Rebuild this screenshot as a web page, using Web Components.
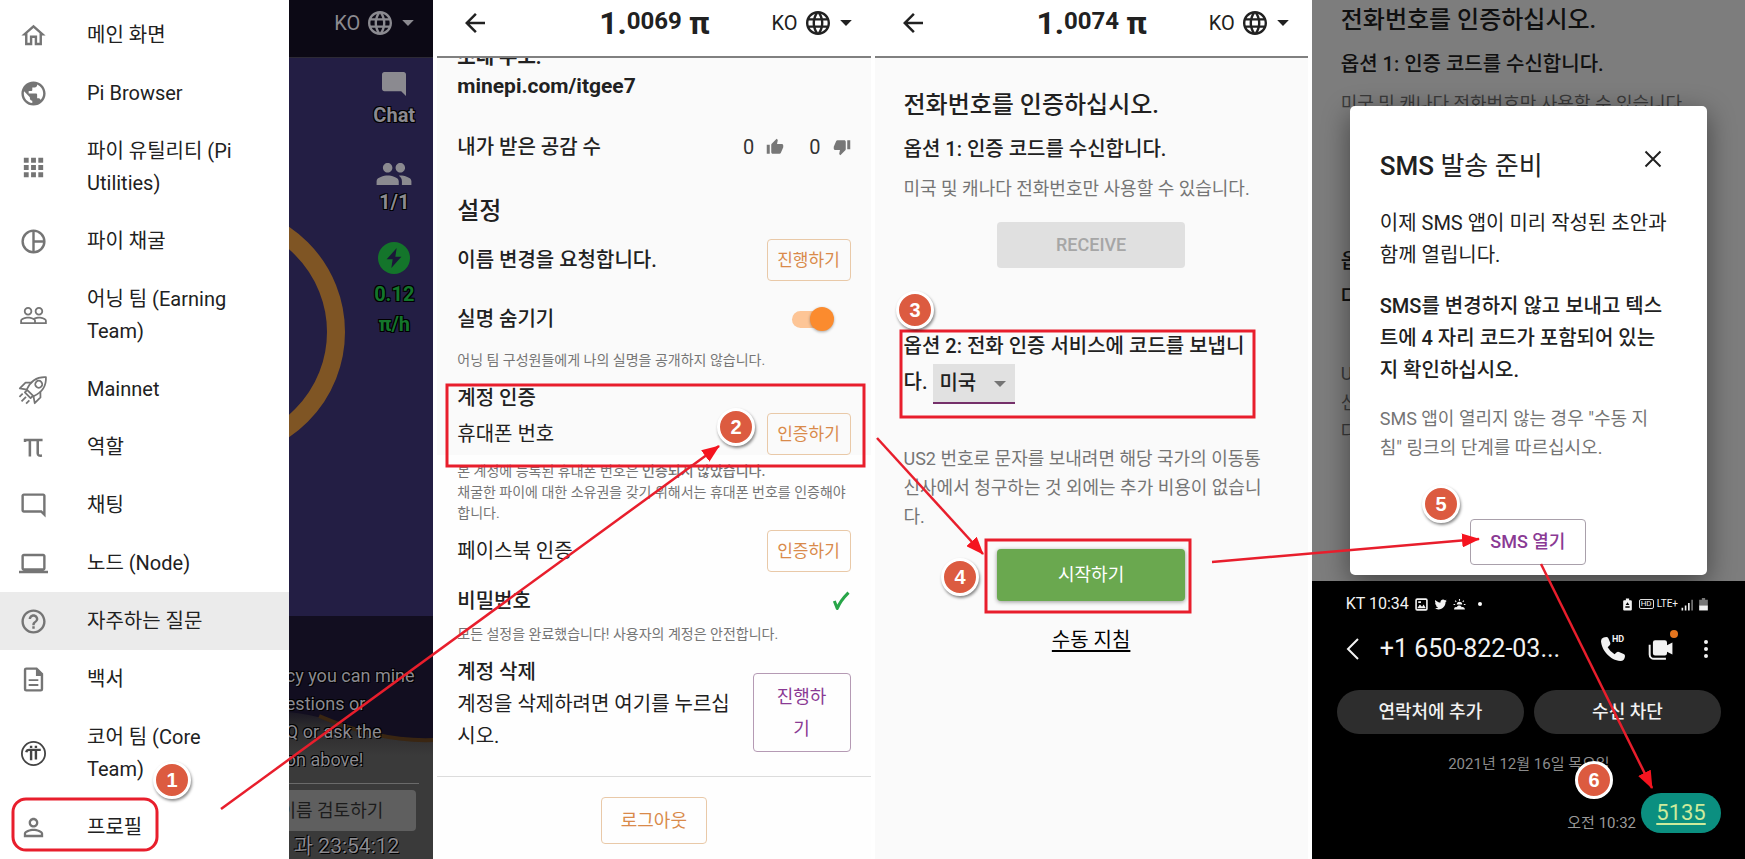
<!DOCTYPE html>
<html lang="ko">
<head>
<meta charset="utf-8">
<title>Pi 전화번호 인증 안내</title>
<style>
body{margin:0;background:#fff;color:#212121;font-family:Roboto,"Noto Sans CJK KR",sans-serif;font-size:20px;line-height:32px}
</style>
</head>
<body>
<guide-page></guide-page>
<script>
const solid = d => `<path d="${d}" fill="currentColor"/>`;
const line = (inner, w = 2) => `<g fill="none" stroke="currentColor" stroke-width="${w}">${inner}</g>`;
const ICONS = {
  home: solid('M12 5.69l5 4.5V18h-2v-6H9v6H7v-7.81l5-4.5M12 3L2 12h3v8h6v-6h2v6h6v-8h3L12 3z'),
  public: solid('M12 2C6.48 2 2 6.48 2 12s4.48 10 10 10 10-4.48 10-10S17.52 2 12 2zm-1 17.93c-3.95-.49-7-3.85-7-7.93 0-.62.08-1.21.21-1.79L9 15v1c0 1.1.9 2 2 2v1.93zm6.9-2.54c-.26-.81-1-1.39-1.9-1.39h-1v-3c0-.55-.45-1-1-1H8v-2h2c.55 0 1-.45 1-1V7h2c1.1 0 2-.9 2-2v-.41c2.93 1.19 5 4.06 5 7.41 0 2.08-.8 3.97-2.1 5.39z'),
  apps: solid('M4 8h4V4H4v4zm6 12h4v-4h-4v4zm-6 0h4v-4H4v4zm0-6h4v-4H4v4zm6 0h4v-4h-4v4zm6-10v4h4V4h-4zm-6 4h4V4h-4v4zm6 6h4v-4h-4v4zm0 6h4v-4h-4v4z'),
  pie: line('<circle cx="12" cy="12" r="9"/><path d="M12 3v18M12 12h9"/>'),
  team: solid('M16.5 13c-1.2 0-3.07.34-4.5 1-1.43-.67-3.3-1-4.5-1C5.33 13 1 14.08 1 16.25V19h22v-2.75c0-2.17-4.33-3.25-6.5-3.25zm-4 4.5h-10v-1.25c0-.54 2.56-1.75 5-1.75s5 1.21 5 1.75v1.25zm9 0H14v-1.25c0-.46-.2-.86-.52-1.22.88-.3 1.96-.53 3.02-.53 2.44 0 5 1.21 5 1.75v1.25zM7.5 12c1.93 0 3.5-1.57 3.5-3.5S9.43 5 7.5 5 4 6.57 4 8.5 5.57 12 7.5 12zm0-5.5c1.1 0 2 .9 2 2s-.9 2-2 2-2-.9-2-2 .9-2 2-2zm9 5.5c1.93 0 3.5-1.57 3.5-3.5S18.43 5 16.5 5 13 6.57 13 8.5s1.57 3.5 3.5 3.5zm0-5.5c1.1 0 2 .9 2 2s-.9 2-2 2-2-.9-2-2 .9-2 2-2z'),
  rocket: line('<g transform="rotate(45 12 12) translate(-1.440 -.3) scale(1.120)" stroke-linejoin="round"><path d="M12-2C16.500 2 18 8 15.500 14.500h-7C6 8 7.500 2 12-2z"/><circle cx="12" cy="5.500" r="2.600"/><path d="M9 14.500v2.500h6v-2.500M7.300 8.500L4.200 11.500V17.500L8.500 14.500M16.700 8.500l3.100 3V17.500L15.500 14.500M12 18.800v4.700M8.500 18.800v3.400M15.500 18.800v3.400"/></g>', 1.3),
  pi: line('<path d="M5 7.500V5.800H19.500M9 6v13.500M15.500 6v11q0 2.200 3.500 1.700"/>', 2.1),
  comment: solid('M20 17.170L18.830 16H4V4h16v13.170zM20 2H4c-1.100 0-2 .9-2 2v12c0 1.100.9 2 2 2h14l4 4V4c0-1.100-.9-2-2-2z'),
  commentFull: solid('M22 4c0-1.100-.9-2-2-2H4c-1.100 0-2 .9-2 2v12c0 1.100.9 2 2 2h14l4 4V4z'),
  laptop: solid('M20 18c1.100 0 1.990-.9 1.990-2L22 6c0-1.100-.9-2-2-2H4c-1.100 0-2 .9-2 2v10c0 1.100.9 2 2 2H0v2h24v-2h-4zM4 6h16v10H4V6z'),
  help: solid('M11 18h2v-2h-2v2zm1-16C6.480 2 2 6.480 2 12s4.480 10 10 10 10-4.480 10-10S17.520 2 12 2zm0 18c-4.410 0-8-3.590-8-8s3.590-8 8-8 8 3.590 8 8-3.590 8-8 8zm0-14c-2.210 0-4 1.790-4 4h2c0-1.100.9-2 2-2s2 .9 2 2c0 2-3 1.750-3 5h2c0-2.250 3-2.500 3-5 0-2.210-1.790-4-4-4z'),
  doc: line('<path d="M14.500 3H6a1 1 0 0 0-1 1v16a1 1 0 0 0 1 1h12a1 1 0 0 0 1-1V7.500z"/><path d="M8 12.500h8M8 16.500h8" stroke-width="1.600"/>') + solid('M14 3v6h6z'),
  core: '<g color="#444">' + line('<circle cx="12" cy="12" r="9.600"/>', 1.5) + line('<path d="M6 11Q6.300 9 8.500 9H18M10 9v8.500M14 9v8M10 5.500v2M14 5.500v2"/>', 2) + '</g>',
  person: solid('M12 5.900c1.160 0 2.100.94 2.100 2.100s-.94 2.100-2.100 2.100S9.900 9.160 9.900 8s.94-2.100 2.100-2.100m0 9c2.970 0 6.100 1.460 6.100 2.100v1.100H5.900V17c0-.64 3.130-2.100 6.100-2.100M12 4C9.790 4 8 5.790 8 8s1.790 4 4 4 4-1.790 4-4-1.790-4-4-4zm0 9c-2.670 0-8 1.340-8 4v3h16v-3c0-2.660-5.330-4-8-4z'),
  people: solid('M16 11c1.660 0 2.990-1.340 2.990-3S17.660 5 16 5c-1.660 0-3 1.340-3 3s1.340 3 3 3zm-8 0c1.660 0 2.990-1.340 2.990-3S9.660 5 8 5C6.340 5 5 6.340 5 8s1.340 3 3 3zm0 2c-2.330 0-7 1.170-7 3.500V19h14v-2.500c0-2.330-4.670-3.500-7-3.500zm8 0c-.29 0-.62.02-.97.05 1.160.84 1.970 1.970 1.970 3.450V19h6v-2.500c0-2.330-4.670-3.500-7-3.500z'),
  bolt: '<circle cx="12" cy="12" r="12" fill="currentColor"/><path d="M14 4.500L6.500 13H11l-1 6.500 7.500-8.500H13z" fill="#1a1838"/>',
  globe: solid('M11.990 2C6.470 2 2 6.480 2 12s4.470 10 9.990 10C17.520 22 22 17.520 22 12S17.520 2 11.990 2zm6.930 6h-2.950c-.32-1.250-.78-2.450-1.380-3.560 1.840.63 3.370 1.910 4.330 3.560zM12 4.040c.83 1.200 1.480 2.530 1.910 3.960h-3.820c.43-1.430 1.080-2.760 1.910-3.960zM4.260 14C4.100 13.360 4 12.690 4 12s.1-1.360.26-2h3.380c-.08.66-.14 1.320-.14 2 0 .68.06 1.340.14 2H4.260zm.82 2h2.950c.32 1.250.78 2.450 1.380 3.560-1.840-.63-3.370-1.900-4.330-3.560zm2.950-8H5.080c.96-1.660 2.490-2.930 4.330-3.560C8.810 5.550 8.350 6.750 8.030 8zM12 19.960c-.83-1.200-1.480-2.530-1.910-3.960h3.820c-.43 1.430-1.080 2.760-1.910 3.960zM14.340 14H9.660c-.09-.66-.16-1.320-.16-2 0-.68.07-1.350.16-2h4.680c.09.65.16 1.320.16 2 0 .68-.07 1.340-.16 2zm.25 5.560c.6-1.110 1.060-2.310 1.380-3.560h2.950c-.96 1.650-2.490 2.930-4.330 3.560zM16.360 14c.08-.66.14-1.320.14-2 0-.68-.06-1.340-.14-2h3.380c.16.64.26 1.310.26 2s-.1 1.360-.26 2h-3.380z'),
  caret: solid('M7 9.500l5 5 5-5z'),
  back: solid('M20 11H7.830l5.590-5.590L12 4l-8 8 8 8 1.410-1.410L7.830 13H20v-2z'),
  up: solid('M1 21h4V9H1v12zm22-11c0-1.100-.9-2-2-2h-6.310l.95-4.570.03-.32c0-.41-.17-.79-.44-1.060L14.170 1 7.590 7.590C7.220 7.950 7 8.450 7 9v10c0 1.100.9 2 2 2h9c.83 0 1.540-.5 1.840-1.220l3.020-7.050c.09-.23.14-.47.14-.73v-2z'),
  down: solid('M15 3H6c-.83 0-1.540.5-1.840 1.220l-3.020 7.050c-.09.23-.14.47-.14.73v2c0 1.100.9 2 2 2h6.310l-.95 4.570-.03.32c0 .41.17.79.44 1.060L9.830 23l6.590-6.590c.36-.36.58-.86.58-1.410V5c0-1.100-.9-2-2-2zm4 0v12h4V3h-4z'),
  check: line('<path d="M4 12q1.500 4 3.500 9Q11 12 21 2" stroke-linejoin="round"/>', 3.6),
  close: line('<path d="M2 2l20 20M22 2L2 22"/>', 2.6),
  chevron: line('<path d="M17 2L7 12l10 10"/>', 2),
  phone: solid('M3 6Q3 4 5 3.300L7 3Q8 3 8.500 4L10 7.500Q10.200 8.500 9.500 9.200L8 10.700Q9.800 14 13.200 15.900L14.800 14.400Q15.500 13.800 16.500 14.200L20 15.800Q21 16.300 21 17.300Q20.800 21 17.500 21C10 20.500 3.400 13 3 6z'),
  video: solid('M7 4h9a2 2 0 0 1 2 2v2.500l5-2.500v11l-5-2.500V16a2 2 0 0 1-2 2H7a2 2 0 0 1-2-2V6A2 2 0 0 1 7 4z') + line('<path d="M2 8v9a4 4 0 0 0 4 4H17"/>', 1.8),
  more: solid('M12 3a2 2 0 1 0 0 4 2 2 0 0 0 0-4zm0 7a2 2 0 1 0 0 4 2 2 0 0 0 0-4zm0 7a2 2 0 1 0 0 4 2 2 0 0 0 0-4z'),
  picture: line('<rect x="2" y="2" width="20" height="20" rx="2"/>', 3) + solid('M4 19l5-7 4 4 3-4 4 7zM6 6h5v3H6z'),
  bird: solid('M23.643 4.937c-.835.37-1.732.62-2.675.733.962-.576 1.700-1.490 2.048-2.578-.9.534-1.897.922-2.958 1.130-.85-.904-2.060-1.470-3.400-1.470-2.572 0-4.658 2.086-4.658 4.660 0 .364.042.718.12 1.060-3.873-.195-7.304-2.050-9.602-4.868-.4.69-.63 1.490-.63 2.342 0 1.616.823 3.043 2.072 3.878-.764-.025-1.482-.234-2.110-.583v.06c0 2.257 1.605 4.140 3.737 4.568-.392.106-.803.162-1.227.162-.3 0-.593-.028-.877-.082.593 1.850 2.313 3.198 4.352 3.234-1.595 1.250-3.604 1.995-5.786 1.995-.376 0-.747-.022-1.112-.065 2.062 1.323 4.510 2.093 7.140 2.093 8.570 0 13.255-7.098 13.255-13.254 0-.2-.005-.402-.014-.602.91-.658 1.700-1.477 2.323-2.410z'),
  weather: solid('M2 21c0-4 3-5 5-4 1-4 8-4 9 0 3-1 6 1 6 4zM7 12a5 5 0 0 1 10 0z') + line('<path d="M12 2v3M4 5l2 2M20 5l-2 2M1 12h3M20 12h3"/>', 2),
  recycle: solid('M9 1h6v3h3a2 2 0 0 1 2 2v15a2 2 0 0 1-2 2H6a2 2 0 0 1-2-2V6a2 2 0 0 1 2-2h3z') + '<path d="M12 8l3.500 5h-7zM8 15h8v3H8z" fill="#000"/>',
  signal: solid('M1 18h3v5H1zM7 14h3v9H7zM13 9h3v14h-3z') + '<path d="M19 3h3v20h-3z" fill="#777"/>',
  battery: '<path d="M9 0h6v3h5v12H4V3h5z" fill="#777"/><path d="M4 14h16v9H4z" fill="currentColor"/>'
};

/* Registers an element whose shadow root is built from its styles and markup. */
function define(name, css, markup) {
  customElements.define(name, class extends HTMLElement {
    constructor() {
      super();
      const tpl = document.createElement('template');
      const html = typeof markup === 'function' ? markup(this) : markup;
      tpl.innerHTML = `<style>*{box-sizing:border-box}h1,h2,h3,p{margin:0;font-size:inherit;font-weight:inherit}button,select{font:inherit;color:inherit;margin:0}${css}</style>${html}`;
      this.attachShadow({ mode: 'open' }).append(tpl.content.cloneNode(true));
    }
  });
}

define('ui-icon', ':host{display:block;flex:none;width:24px;height:24px}svg{display:block;width:100%;height:100%;overflow:visible}',
  el => `<svg viewBox="${el.getAttribute('box') || '0 0 24 24'}" aria-hidden="true">${ICONS[el.getAttribute('name')]}</svg>`);

define('outline-button', `
  :host{display:block;flex:none;width:84px;color:#d98a4a;font-size:17px;--edge:#e9c9a8;--h:42px}
  :host([tone=purple]){color:#8a3a94;font-size:18px;--edge:#b59ab4;--h:79px;width:98px}
  :host([size=large]){width:106px;font-size:18px;--h:47px}
  :host([size=dialog]){width:116px;font-weight:500;--h:46px;--edge:#a9a0ab}
  button{display:block;width:100%;min-height:var(--h);padding:0 20px;border:1px solid var(--edge);border-radius:4px;background:transparent;line-height:32px}
  :host(:not([tone])) button,:host([size]) button{padding:0;white-space:nowrap}
`, '<button type="button"><slot></slot></button>');

define('lang-picker', `
  :host{display:block}
  button{display:flex;align-items:center;border:0;padding:0;background:none;line-height:32px}
  ui-icon.globe{margin-left:8px}
  ui-icon.caret{width:28px;height:28px;margin-left:2px}
`, '<button type="button">KO<ui-icon class="globe" name="globe" box="2 2 20 20"></ui-icon><ui-icon class="caret" name="caret"></ui-icon></button>');

define('phone-header', `
  :host{display:grid;grid-template-columns:1fr auto 1fr;align-items:center;height:58px;padding:0 11px 10px 28px;background:#fff;border-bottom:2px solid #808080;box-sizing:border-box}
  .back{border:0;background:none;padding:0;width:20px}
  .back ui-icon{width:20px;height:20px}
  h1{display:flex;align-items:flex-start;font-weight:700;font-size:32px;line-height:40px;padding-right:16px}
  sup{font-size:24px;line-height:36px;margin-right:7px;vertical-align:baseline}
  lang-picker{justify-self:end}
`, el => `<button class="back" type="button" aria-label="뒤로"><ui-icon name="back" box="4 4 16 16"></ui-icon></button>
  <h1>1.<sup>${el.getAttribute('fraction')}</sup>π</h1><lang-picker></lang-picker>`);

define('nav-item', `
  :host{display:block}
  :host([active]){background:#ebebeb}
  a{display:flex;align-items:center;padding:13px 32px 13px 19px;color:inherit;text-decoration:none;line-height:32px}
  ui-icon{width:29px;height:29px;margin-right:39px;color:#757575}
`, el => `<a href="#"><ui-icon name="${el.getAttribute('icon')}"></ui-icon><span><slot></slot></span></a>`);

define('nav-drawer', ':host{display:block;background:#fff;padding-top:6px}', `
  <nav>
  <nav-item icon="home">메인 화면</nav-item>
  <nav-item icon="public">Pi Browser</nav-item>
  <nav-item icon="apps">파이 유틸리티 (Pi Utilities)</nav-item>
  <nav-item icon="pie">파이 채굴</nav-item>
  <nav-item icon="team">어닝 팀 (Earning Team)</nav-item>
  <nav-item icon="rocket">Mainnet</nav-item>
  <nav-item icon="pi">역할</nav-item>
  <nav-item icon="comment">채팅</nav-item>
  <nav-item icon="laptop">노드 (Node)</nav-item>
  <nav-item icon="help" active>자주하는 질문</nav-item>
  <nav-item icon="doc">백서</nav-item>
  <nav-item icon="core">코어 팀 (Core Team)</nav-item>
  <nav-item icon="person">프로필</nav-item>
  </nav>`);

define('home-backdrop', `
  :host{display:flex;flex-direction:column;position:relative;overflow:hidden;background:#231e44;color:#8b8a90}
  header{display:flex;justify-content:flex-end;height:58px;padding:7px 11px 0 0;background:#0c0915;border-bottom:1px solid #2d2a36}
  .ring{position:absolute;left:0;top:0;width:144px;height:616px}
  .stats{position:relative;flex:1;align-self:flex-end;width:78px;padding-top:10px;text-align:center;font-weight:700;line-height:28px;
    text-shadow:1px 1px #000,-1px -1px #000,1px -1px #000,-1px 1px #000}
  .stat{display:flex;flex-direction:column;align-items:center;gap:1px;margin-bottom:26px}
  .slot{display:grid;place-items:center;height:32px}
  .chat{width:24px;height:24px}.people{width:38px;height:38px}.bolt{width:32px;height:32px}
  .rate{color:#14752b;line-height:30px;gap:5px}
  footer{padding:46px 0 0;background:linear-gradient(#120e20 0 88px,#2b2a2c 110px,#3a3a3a 140px,#3a3a3a);font-size:18px;line-height:28px;white-space:nowrap;position:relative}
  .hill{position:absolute;left:0;top:0;width:100%;height:130px}
  .text{position:relative;margin-left:-3px;text-shadow:1px 1px #000,-1px -1px #000,1px -1px #000}
  hr{margin:9px 14px 6px 0;border:0;border-top:1px solid #6a6a6a}
  button{display:block;width:calc(100% + 19px);margin-left:-36px;height:41px;border:0;border-radius:4px;background:#5f5f5f;color:#1c1c1c;text-align:right;padding:0 33px 0 0}
  .time{font-size:21px;line-height:26px;margin:2px 0 0 5px;text-shadow:1px 1px #000,-1px -1px #000}
`, `
  <header><lang-picker></lang-picker></header>
  <svg class="ring" viewBox="0 0 144 616" aria-hidden="true"><circle cx="-71" cy="332" r="118" fill="none" stroke="#7f5524" stroke-width="18"/></svg>
  <div class="stats">
    <div class="stat"><span class="slot"><ui-icon class="chat" name="commentFull" box="2 2 20 20"></ui-icon></span><span>Chat</span></div>
    <div class="stat"><span class="slot"><ui-icon class="people" name="people"></ui-icon></span><span>1/1</span></div>
    <div class="stat rate"><span class="slot"><ui-icon class="bolt" name="bolt"></ui-icon></span><span>0.12<br>π/h</span></div>
  </div>
  <footer>
    <svg class="hill" viewBox="0 0 144 130" preserveAspectRatio="none" aria-hidden="true"><path d="M0 0H144V124Q90 124 40 104Q20 98 0 96z" fill="#120e20"/><path d="M30 100Q90 126 144 124" fill="none" stroke="#3a2612" stroke-width="4"/></svg>
    <div class="text">cy you can mine<br>estions or<br>Q or ask the<br>on above!</div>
    <hr>
    <button type="button">이름 검토하기</button>
    <div class="time">과 23:54:12</div>
  </footer>`);

define('profile-screen', `
  :host{display:flex;flex-direction:column;background:#fefefe}
  main{overflow:hidden}
  section{padding:0 20px}
  .top{background:#fafafa}
  .row{display:flex;align-items:center;justify-content:space-between;min-height:42px}
  h2{font-size:24px;font-weight:500;line-height:40px;margin:23px 0 8px}
  h3,.strong{font-weight:500}
  .invite{margin-top:-15px;line-height:29px;font-weight:700}
  .invite span{font-size:21px}
  .votes{display:flex;align-items:center;color:#333}
  .votes ui-icon{width:18px;height:18px;color:#777;margin-left:12px}
  .votes ui-icon:first-of-type{margin-right:25px}
  .small{font-size:14px;line-height:21px;color:#757575}
  .account{padding-top:11px}
  .account h3{margin-bottom:-1px}
  input{appearance:none;position:relative;width:42px;height:24px;margin:0 17px 0 0}
  input::before{content:"";position:absolute;left:0;top:4px;width:38px;height:17px;border-radius:9px;background:#fdc596}
  input::after{content:"";position:absolute;right:0;top:0;width:24px;height:24px;border-radius:50%;background:#fb8b2e;box-shadow:0 1px 3px #0005}
  .ok{width:20px;height:22px;color:#27a548}
  .delete{display:flex;align-items:flex-end;gap:16px;margin-top:11px}
  footer{border-top:1px solid #dcdcdc;margin-top:24px;padding-top:20px;display:flex;justify-content:center}
`, `
  <phone-header fraction="0069"></phone-header>
  <main>
    <section class="top">
      <p class="invite">초대 주소:<br><span>minepi.com/itgee7</span></p>
      <div class="row" style="margin-top:25px"><span class="strong">내가 받은 공감 수</span><span class="votes">0<ui-icon name="up"></ui-icon>0<ui-icon name="down"></ui-icon></span></div>
      <h2>설정</h2>
      <div class="row"><h3>이름 변경을 요청합니다.</h3><outline-button>진행하기</outline-button></div>
      <div class="row" style="margin-top:17px"><label class="strong" for="hide">실명 숨기기</label><input id="hide" type="checkbox" role="switch" checked></div>
      <p class="small" style="margin-top:10px">어닝 팀 구성원들에게 나의 실명을 공개하지 않습니다.</p>
      <div class="account"><h3>계정 인증</h3>
      <div class="row"><span>휴대폰 번호</span><outline-button>인증하기</outline-button></div></div>
    </section>
    <section>
      <p class="small" style="padding:6px 0">본 계정에 등록된 휴대폰 번호은 <b style="font-weight:500">인증되지 않았습니다.</b><br>채굴한 파이에 대한 소유권을 갖기 위해서는 휴대폰 번호를 인증해야 합니다.</p>
      <div class="row"><span>페이스북 인증</span><outline-button>인증하기</outline-button></div>
      <div class="row" style="margin-top:8px"><h3>비밀번호</h3><ui-icon class="ok" name="check"></ui-icon></div>
      <p class="small" style="margin-top:2px">모든 설정을 완료했습니다! 사용자의 계정은 안전합니다.</p>
      <div class="delete"><div><h3>계정 삭제</h3><p>계정을 삭제하려면 여기를 누르십시오.</p></div><outline-button tone="purple">진행하기</outline-button></div>
    </section>
    <footer><outline-button size="large">로그아웃</outline-button></footer>
  </main>`);

define('verify-form', `
  :host{display:block;background:#fafafa;padding:31px 29px 0}
  :host([covered]) :is(button,.pick,a){visibility:hidden}
  h2{font-size:24px;font-weight:500}
  h3{font-weight:500;margin-top:12px}
  p{font-size:18px;line-height:29px;color:#757575;margin-top:9px}
  button{display:block;width:188px;min-height:46px;margin:19px auto 0;border:0;border-radius:4px;background:#e0e0e0;color:#a6a6a6;font-size:18px;font-weight:500}
  .country{margin-top:60px;padding-right:16px;line-height:36px}
  .pick{position:relative;display:inline-block;vertical-align:middle;margin-left:1px}
  select{appearance:none;display:block;width:82px;height:40px;padding:0 6px;border:0;border-bottom:2px solid #75306a;border-radius:0;background:#e1e1e1}
  .pick::after{content:"";position:absolute;right:9px;top:17px;border:6px solid transparent;border-top:6px solid #757575;border-bottom:0;pointer-events:none}
  p.cost{margin-top:40px;padding-right:8px}
  button.go{min-height:52px;margin-top:18px;background:#6aa84f;color:#fff;font-weight:400;box-shadow:0 1px 4px #0006}
  a{display:table;margin:23px auto 0;color:#000;text-underline-offset:3px;text-decoration-thickness:2px}
`, `
  <h2>전화번호를 인증하십시오.</h2>
  <h3>옵션 1: 인증 코드를 수신합니다.</h3>
  <p>미국 및 캐나다 전화번호만 사용할 수 있습니다.</p>
  <button type="button" disabled>RECEIVE</button>
  <h3 class="country">옵션 2: 전화 인증 서비스에 코드를 보냅니다. <span class="pick"><select aria-label="국가"><option>미국</option></select></span></h3>
  <p class="cost">US2 번호로 문자를 보내려면 해당 국가의 이동통신사에서 청구하는 것 외에는 추가 비용이 없습니다.</p>
  <button class="go" type="button">시작하기</button>
  <a href="#">수동 지침</a>`);

define('verify-screen', ':host{display:block;background:#fafafa}', '<phone-header fraction="0074"></phone-header><verify-form></verify-form>');

define('sms-dialog', `
  :host{display:block;background:#fff;border-radius:5px;padding:42px 36px 10px 30px;box-shadow:0 8px 28px #0007}
  header{display:flex;justify-content:space-between;align-items:flex-start}
  h2{font-size:26px;line-height:36px}
  h2 span{font-weight:500}
  .x{border:0;background:none;padding:2px 0;margin-right:9px}
  .x ui-icon{width:18px;height:18px}
  p{margin-top:19px}
  .lead{margin-top:23px}
  .bold{font-weight:500}
  .note{font-size:18px;line-height:29px;color:#757575;padding-right:12px;margin-top:18px}
  outline-button{margin:57px auto 0}
  .act{padding-left:5px}
`, `
  <header><h2><span>SMS</span> 발송 준비</h2><button class="x" type="button" aria-label="닫기"><ui-icon name="close"></ui-icon></button></header>
  <p class="lead">이제 SMS 앱이 미리 작성된 초안과 함께 열립니다.</p>
  <p class="bold">SMS를 변경하지 않고 보내고 텍스트에 4 자리 코드가 포함되어 있는지 확인하십시오.</p>
  <p class="note">SMS 앱이 열리지 않는 경우 "수동 지침" 링크의 단계를 따르십시오.</p>
  <div class="act"><outline-button tone="purple" size="dialog">SMS 열기</outline-button></div>`);

define('message-thread', `
  :host{display:block;background:#000;color:#f2f2f2;padding:0 24px 26px 25px}
  .status,.bar,.pills,.msg{display:flex;align-items:center}
  .status{height:46px;padding:0 11px 0 9px;font-size:16px;line-height:20px;gap:6px}
  .status ui-icon{width:13px;height:13px}
  .dot{width:4px;height:4px;border-radius:50%;background:#fff;margin-left:6px}
  .right{margin-left:auto;display:flex;align-items:center;gap:3px;font-size:10px;line-height:12px}
  .right ui-icon:first-child{margin-right:2px}
  .hd{border:1px solid #ddd;border-radius:2px;font-size:8px;line-height:8px;padding:0 1px}
  .bar{height:44px;padding:0 3px 0 4px}
  .bar h2{font-size:25px;margin:0 auto 0 15px;white-space:nowrap}
  .bar ui-icon{width:24px;height:24px}
  .call,.cam{position:relative}
  .call{margin-right:22px}
  .call span{position:absolute;left:11px;top:-3px;font-size:9px;line-height:10px;font-weight:700;background:#000;border-radius:2px}
  .cam{margin-right:20px}
  .cam ui-icon{width:27px;height:26px}
  .cam::after{content:"";position:absolute;right:-4px;top:-6px;width:8px;height:8px;border-radius:50%;background:#e5751e}
  .pills{gap:10px;margin-top:19px}
  .pills button{flex:1;height:44px;border:0;border-radius:22px;background:#2d2d2d;font-size:18px;font-weight:500}
  .date{margin-top:20px;text-align:center;font-size:15px;line-height:20px;color:#8c8c8c}
  .msg{justify-content:flex-end;gap:5px;margin-top:19px}
  .msg time{font-size:15px;line-height:20px;color:#9a9a9a;padding-top:20px}
  .msg a{width:80px;border-radius:20px;background:#0b8f80;color:#cdeb9c;text-align:center;font-size:22px;line-height:40px;text-underline-offset:3px}
`, `
  <div class="status">KT 10:34<ui-icon name="picture"></ui-icon><ui-icon name="bird"></ui-icon><ui-icon name="weather"></ui-icon><i class="dot"></i>
    <span class="right"><ui-icon name="recycle"></ui-icon><span class="hd">HD</span><span>LTE+</span><ui-icon name="signal"></ui-icon><ui-icon name="battery"></ui-icon></span></div>
  <div class="bar"><ui-icon name="chevron"></ui-icon><h2>+1 650-822-03...</h2>
    <span class="call"><ui-icon name="phone" box="3 3 18 18"></ui-icon><span>HD</span></span>
    <span class="cam"><ui-icon name="video"></ui-icon></span><ui-icon name="more"></ui-icon></div>
  <div class="pills"><button type="button">연락처에 추가</button><button type="button">수신 차단</button></div>
  <p class="date">2021년 12월 16일 목요일</p>
  <div class="msg"><time>오전 10:32</time><a href="#">5135</a></div>`);

define('sms-screen', `
  :host{display:flex;flex-direction:column}
  .stage{position:relative;flex:1;overflow:hidden;background:#fafafa}
  verify-form{margin-top:-27px}
  .scrim{position:absolute;inset:0;background:#0000007f}
  sms-dialog{position:absolute;left:38px;right:38px;top:106px}
`, '<div class="stage"><verify-form covered></verify-form><div class="scrim"></div><sms-dialog></sms-dialog></div><message-thread></message-thread>');

define('step-badge', `
  :host{position:absolute;display:grid;place-items:center;width:38px;height:38px;box-sizing:border-box;border:3px solid #fff;border-radius:50%;background:#dc5b40;color:#fff;
    font:700 20px/20px "Liberation Sans",sans-serif;box-shadow:1px 2px 3px #0007;transform:translate(-50%,-50%)}
`, '<slot></slot>');

define('guide-marks', `
  :host{display:block;position:absolute;inset:0;pointer-events:none}
  svg{position:absolute;left:0;top:0;width:100%;height:100%}
`, `
  <svg aria-hidden="true">
    <defs><marker id="tip" viewBox="0 0 18 14" refX="17" refY="7" markerWidth="18" markerHeight="14" markerUnits="userSpaceOnUse" orient="auto"><path d="M0 0L18 7L0 14z" fill="#f5141f"/></marker></defs>
    <g fill="none" stroke="#e81e2c" stroke-width="3">
      <rect x="13" y="799" width="144" height="51" rx="13"/>
      <rect x="447" y="385" width="417" height="81"/>
      <rect x="901" y="331" width="353" height="86"/>
      <rect x="986" y="540" width="204" height="72"/>
      <g stroke-width="2.500">
        <path d="M221 809L719 446" marker-end="url(#tip)"/>
        <path d="M877 438L983 554" marker-end="url(#tip)"/>
        <path d="M1212 562L1479 539" marker-end="url(#tip)"/>
        <path d="M1541 564L1652 788" marker-end="url(#tip)"/>
      </g>
    </g>
  </svg>
  <step-badge style="left:172px;top:780px">1</step-badge>
  <step-badge style="left:736px;top:427px">2</step-badge>
  <step-badge style="left:915px;top:310px">3</step-badge>
  <step-badge style="left:960px;top:577px">4</step-badge>
  <step-badge style="left:1441px;top:504px">5</step-badge>
  <step-badge style="left:1594px;top:780px">6</step-badge>`);

define('guide-page', `
  :host{display:grid;grid-template-columns:repeat(4,minmax(0,1fr));gap:4px;position:relative;min-height:100vh;overflow:hidden}
  .first{display:grid;grid-template-columns:2fr 1fr}
`, `
  <div class="first"><nav-drawer></nav-drawer><home-backdrop></home-backdrop></div>
  <profile-screen></profile-screen>
  <verify-screen></verify-screen>
  <sms-screen></sms-screen>
  <guide-marks></guide-marks>`);
</script>
</body>
</html>
